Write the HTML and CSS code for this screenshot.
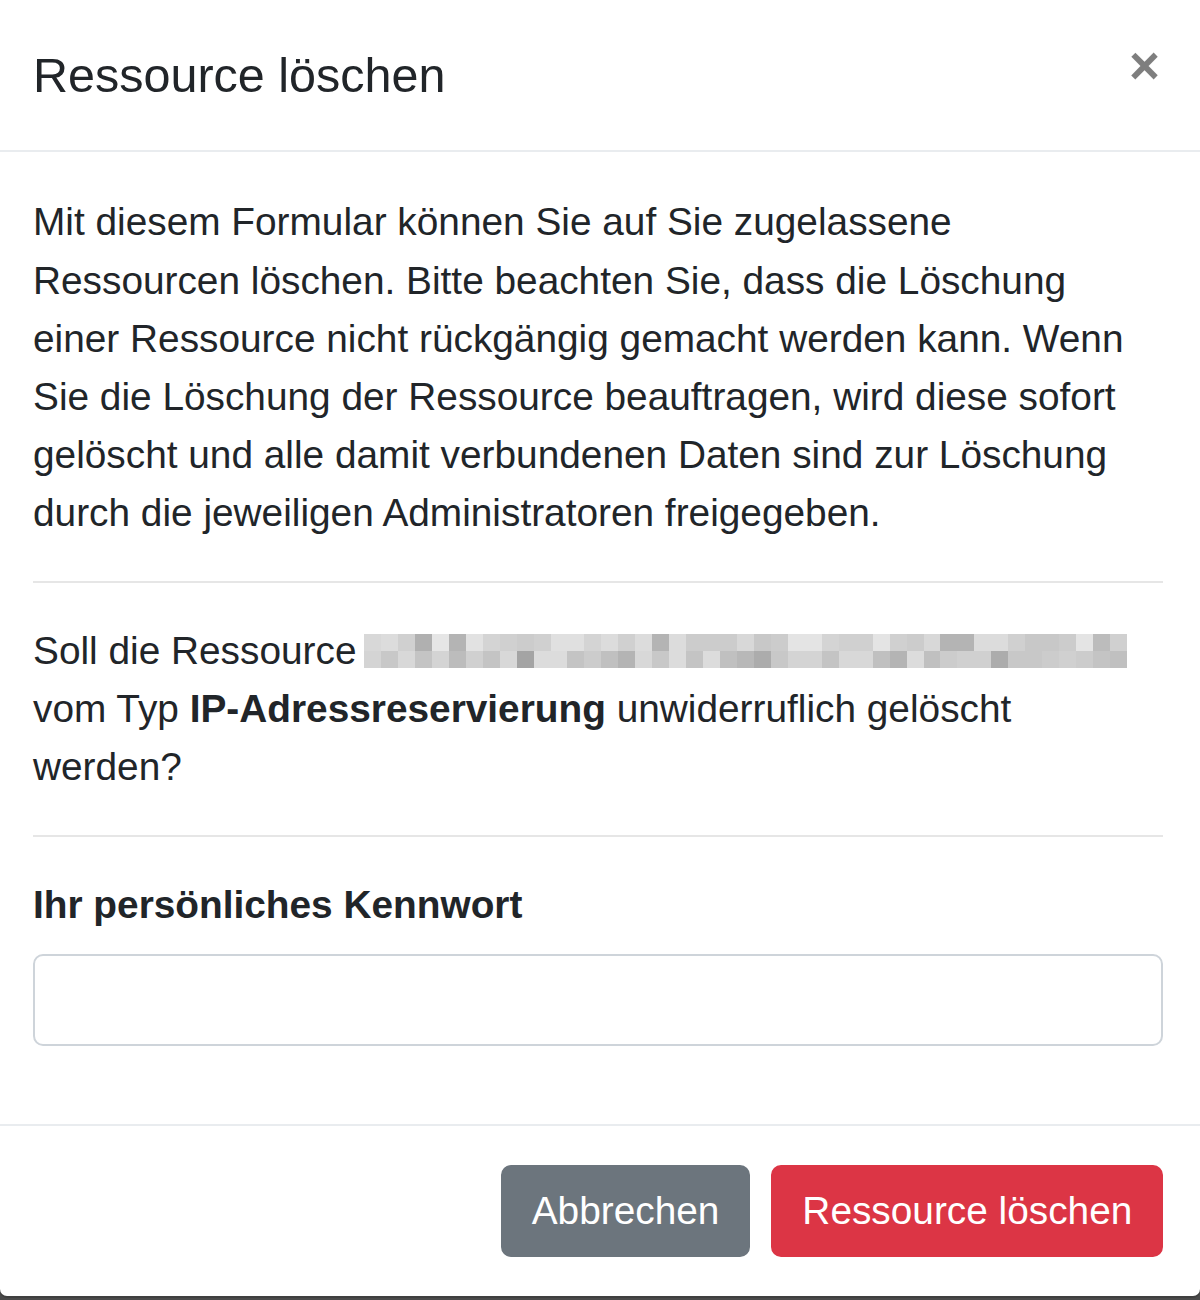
FILE: index.html
```html
<!DOCTYPE html>
<html lang="de">
<head>
  <meta charset="UTF-8" />
  <title>Ressource löschen</title>
  <meta name="viewport" content="width=device-width, initial-scale=1.0" />
  <link rel="stylesheet" href="styles.css">
</head>
<body>

  <div class="modal">
    <!-- Kopf -->
    <div class="modal-header">
      <h5 class="modal-title">Ressource löschen</h5>
      <button type="button" class="close" aria-label="Schließen">&times;</button>
    </div>

    <!-- Inhalt -->
    <div class="modal-body">
      <p>Mit diesem Formular können Sie auf Sie zugelassene Ressourcen löschen. Bitte beachten Sie, dass die Löschung einer Ressource nicht rückgängig gemacht werden kann. Wenn Sie die Löschung der Ressource beauftragen, wird diese sofort gelöscht und alle damit verbundenen Daten sind zur Löschung durch die jeweiligen Administratoren freigegeben.</p>
      <hr>
      <p>Soll die Ressource <svg class="masked" viewBox="0 0 45 2" preserveAspectRatio="none" aria-hidden="true">
        <g shape-rendering="crispEdges">
          <rect x="0" y="0" width="1" height="1" fill="#d8d8d8"/><rect x="1" y="0" width="1" height="1" fill="#dcdcdc"/><rect x="2" y="0" width="1" height="1" fill="#d0d0d0"/><rect x="3" y="0" width="1" height="1" fill="#b0b0b0"/><rect x="4" y="0" width="1" height="1" fill="#e6e6e6"/>
          <rect x="5" y="0" width="1" height="1" fill="#b4b4b4"/><rect x="6" y="0" width="1" height="1" fill="#e2e2e2"/><rect x="7" y="0" width="1" height="1" fill="#d4d4d4"/><rect x="8" y="0" width="1" height="1" fill="#d0d0d0"/><rect x="9" y="0" width="1" height="1" fill="#cccccc"/>
          <rect x="10" y="0" width="1" height="1" fill="#d0d0d0"/><rect x="11" y="0" width="1" height="1" fill="#e0e0e0"/><rect x="12" y="0" width="1" height="1" fill="#e0e0e0"/><rect x="13" y="0" width="1" height="1" fill="#d4d4d4"/><rect x="14" y="0" width="1" height="1" fill="#dcdcdc"/>
          <rect x="15" y="0" width="1" height="1" fill="#d0d0d0"/><rect x="16" y="0" width="1" height="1" fill="#dcdcdc"/><rect x="17" y="0" width="1" height="1" fill="#b4b4b4"/><rect x="18" y="0" width="1" height="1" fill="#dcdcdc"/><rect x="19" y="0" width="1" height="1" fill="#cccccc"/>
          <rect x="20" y="0" width="1" height="1" fill="#cccccc"/><rect x="21" y="0" width="1" height="1" fill="#cccccc"/><rect x="22" y="0" width="1" height="1" fill="#d8d8d8"/><rect x="23" y="0" width="1" height="1" fill="#c8c8c8"/><rect x="24" y="0" width="1" height="1" fill="#cccccc"/>
          <rect x="25" y="0" width="1" height="1" fill="#e4e4e4"/><rect x="26" y="0" width="1" height="1" fill="#e4e4e4"/><rect x="27" y="0" width="1" height="1" fill="#d4d4d4"/><rect x="28" y="0" width="1" height="1" fill="#d0d0d0"/><rect x="29" y="0" width="1" height="1" fill="#d0d0d0"/>
          <rect x="30" y="0" width="1" height="1" fill="#e4e4e4"/><rect x="31" y="0" width="1" height="1" fill="#d0d0d0"/><rect x="32" y="0" width="1" height="1" fill="#cccccc"/><rect x="33" y="0" width="1" height="1" fill="#d8d8d8"/><rect x="34" y="0" width="1" height="1" fill="#b4b4b4"/>
          <rect x="35" y="0" width="1" height="1" fill="#b4b4b4"/><rect x="36" y="0" width="1" height="1" fill="#dcdcdc"/><rect x="37" y="0" width="1" height="1" fill="#dcdcdc"/><rect x="38" y="0" width="1" height="1" fill="#d0d0d0"/><rect x="39" y="0" width="1" height="1" fill="#c8c8c8"/>
          <rect x="40" y="0" width="1" height="1" fill="#c8c8c8"/><rect x="41" y="0" width="1" height="1" fill="#cccccc"/><rect x="42" y="0" width="1" height="1" fill="#e4e4e4"/><rect x="43" y="0" width="1" height="1" fill="#bcbcbc"/><rect x="44" y="0" width="1" height="1" fill="#d0d0d0"/>

          <rect x="0" y="1" width="1" height="1" fill="#d4d4d4"/><rect x="1" y="1" width="1" height="1" fill="#c8c8c8"/><rect x="2" y="1" width="1" height="1" fill="#d8d8d8"/><rect x="3" y="1" width="1" height="1" fill="#c4c4c4"/><rect x="4" y="1" width="1" height="1" fill="#d4d4d4"/>
          <rect x="5" y="1" width="1" height="1" fill="#bcbcbc"/><rect x="6" y="1" width="1" height="1" fill="#d0d0d0"/><rect x="7" y="1" width="1" height="1" fill="#c4c4c4"/><rect x="8" y="1" width="1" height="1" fill="#d8d8d8"/><rect x="9" y="1" width="1" height="1" fill="#a4a4a4"/>
          <rect x="10" y="1" width="1" height="1" fill="#dcdcdc"/><rect x="11" y="1" width="1" height="1" fill="#dcdcdc"/><rect x="12" y="1" width="1" height="1" fill="#c4c4c4"/><rect x="13" y="1" width="1" height="1" fill="#cccccc"/><rect x="14" y="1" width="1" height="1" fill="#c0c0c0"/>
          <rect x="15" y="1" width="1" height="1" fill="#b4b4b4"/><rect x="16" y="1" width="1" height="1" fill="#d8d8d8"/><rect x="17" y="1" width="1" height="1" fill="#c8c8c8"/><rect x="18" y="1" width="1" height="1" fill="#dcdcdc"/><rect x="19" y="1" width="1" height="1" fill="#c4c4c4"/>
          <rect x="20" y="1" width="1" height="1" fill="#dcdcdc"/><rect x="21" y="1" width="1" height="1" fill="#c0c0c0"/><rect x="22" y="1" width="1" height="1" fill="#b8b8b8"/><rect x="23" y="1" width="1" height="1" fill="#acacac"/><rect x="24" y="1" width="1" height="1" fill="#c8c8c8"/>
          <rect x="25" y="1" width="1" height="1" fill="#d4d4d4"/><rect x="26" y="1" width="1" height="1" fill="#d4d4d4"/><rect x="27" y="1" width="1" height="1" fill="#c4c4c4"/><rect x="28" y="1" width="1" height="1" fill="#d8d8d8"/><rect x="29" y="1" width="1" height="1" fill="#d8d8d8"/>
          <rect x="30" y="1" width="1" height="1" fill="#c0c0c0"/><rect x="31" y="1" width="1" height="1" fill="#b4b4b4"/><rect x="32" y="1" width="1" height="1" fill="#dcdcdc"/><rect x="33" y="1" width="1" height="1" fill="#c0c0c0"/><rect x="34" y="1" width="1" height="1" fill="#cccccc"/>
          <rect x="35" y="1" width="1" height="1" fill="#d0d0d0"/><rect x="36" y="1" width="1" height="1" fill="#d0d0d0"/><rect x="37" y="1" width="1" height="1" fill="#acacac"/><rect x="38" y="1" width="1" height="1" fill="#c8c8c8"/><rect x="39" y="1" width="1" height="1" fill="#c8c8c8"/>
          <rect x="40" y="1" width="1" height="1" fill="#cccccc"/><rect x="41" y="1" width="1" height="1" fill="#d0d0d0"/><rect x="42" y="1" width="1" height="1" fill="#cccccc"/><rect x="43" y="1" width="1" height="1" fill="#c4c4c4"/><rect x="44" y="1" width="1" height="1" fill="#c0c0c0"/>
        </g>
      </svg> vom Typ <strong>IP-Adressreservierung</strong> unwiderruflich gelöscht werden?</p>
      <hr>
      <div class="form-group">
        <label for="password">Ihr persönliches Kennwort</label>
        <input type="password" id="password" class="form-control">
      </div>
    </div>

    <!-- Fuß -->
    <div class="modal-footer">
      <button type="button" class="btn btn-secondary">Abbrechen</button>
      <button type="button" class="btn btn-danger">Ressource löschen</button>
    </div>
  </div>

</body>
</html>
```

FILE: styles.css
```css
html, body {
  margin: 0;
  min-height: 1300px;
}

body {
  background: #4a4a4a;
  font-family: 'Liberation Sans', Arial, sans-serif;
  font-size: 38.8px;
  line-height: 1.5;
  color: #212529;
}

/* Dialog */
.modal {
  width: 1200px;
  background: #fff;
  border-radius: 0 0 7px 7px;
  box-shadow: 0 2px 0 rgba(0,0,0,0.15);
}

.modal-header {
  display: flex;
  align-items: flex-start;
  justify-content: space-between;
  padding: 38.8px 40px 38.8px 33px;
  border-bottom: 2px solid #e9ecef;
}
.modal-title {
  margin: 0;
  font-size: 48.5px;
  font-weight: 400;
  line-height: 1.5;
}

.close {
  margin: 0;
  padding: 0;
  border: 0;
  background: transparent;
  font-family: 'Liberation Sans', Arial, sans-serif;
  font-size: 53px;
  font-weight: 700;
  line-height: 1;
  color: #000;
  opacity: 0.5;
  text-shadow: 0 2px 0 #fff;
  cursor: pointer;
}

.modal-body {
  padding: 41px 37px 39px 33px;
}
.modal-body p {
  margin: 0 0 38.8px;
}
.modal-body hr {
  margin: 38.8px 0;
  border: 0;
  border-top: 2px solid #e6e6e6;
}
.modal-body strong {
  font-weight: 700;
}

/* Verpixelter Name */
.masked {
  display: inline-block;
  width: 763px;
  height: 34px;
  margin-left: -3px;
  vertical-align: -4px;
}

.form-group {
  margin-bottom: 38.8px;
}
.form-group label {
  display: block;
  margin-bottom: 19.4px;
  font-weight: 700;
}
.form-control {
  display: block;
  width: 100%;
  height: 92px;
  box-sizing: border-box;
  border: 2px solid #ced4da;
  border-radius: 10px;
  background: #fff;
  font: inherit;
  padding: 14.5px 29px;
}

.modal-footer {
  display: flex;
  justify-content: flex-end;
  align-items: center;
  padding: 30px 27px 29px 29px;
  border-top: 2px solid #e9ecef;
}

.btn {
  height: 92px;
  margin: 9.7px;
  padding: 0 29px;
  border: 2px solid transparent;
  border-radius: 10px;
  font-family: inherit;
  font-size: 38.8px;
  line-height: 1.5;
  color: #fff;
  cursor: pointer;
}
.btn-secondary {
  background: #6c757d;
  border-color: #6c757d;
}
.btn-danger {
  margin-left: 11.3px;
  background: #dc3545;
  border-color: #dc3545;
}
```
